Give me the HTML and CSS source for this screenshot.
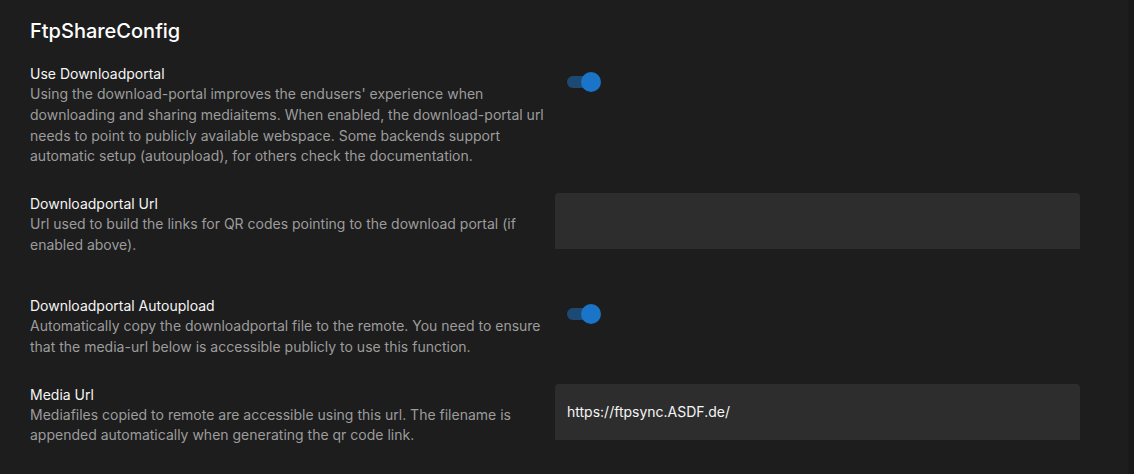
FILE: index.html
```html
<!DOCTYPE html>
<html lang="en">
<head>
  <meta charset="UTF-8">
  <meta name="viewport" content="width=device-width, initial-scale=1.0">
  <title>FtpShareConfig</title>
  <link rel="stylesheet" href="styles.css">
</head>
<body>

  <div class="config-page">
    <h1 class="config-title">FtpShareConfig</h1>

    <div class="settings">

      <div class="setting">
        <div class="setting-info">
          <div class="setting-label">Use Downloadportal</div>
          <div class="setting-desc">Using the download-portal improves the endusers' experience when downloading and sharing mediaitems. When enabled, the download-portal url needs to point to publicly available webspace. Some backends support automatic setup (autoupload), for others check the documentation.</div>
        </div>
        <div class="setting-control">
          <div class="toggle on"><span class="track"></span><span class="thumb"></span></div>
        </div>
      </div>

      <div class="setting">
        <div class="setting-info">
          <div class="setting-label">Downloadportal Url</div>
          <div class="setting-desc">Url used to build the links for QR codes pointing to the download portal (if enabled above).</div>
        </div>
        <div class="setting-control">
          <div class="field"><input type="text" value=""></div>
        </div>
      </div>

      <div class="setting">
        <div class="setting-info">
          <div class="setting-label">Downloadportal Autoupload</div>
          <div class="setting-desc">Automatically copy the downloadportal file to the remote. You need to ensure that the media-url below is accessible publicly to use this function.</div>
        </div>
        <div class="setting-control">
          <div class="toggle on"><span class="track"></span><span class="thumb"></span></div>
        </div>
      </div>

      <div class="setting">
        <div class="setting-info">
          <div class="setting-label">Media Url</div>
          <div class="setting-desc">Mediafiles copied to remote are accessible using this url. The filename is appended automatically when generating the qr code link.</div>
        </div>
        <div class="setting-control">
          <div class="field"><input type="text" value="https://ftpsync.ASDF.de/"></div>
        </div>
      </div>

    </div>
  </div>

</body>
</html>
```

FILE: styles.css
```css
* {
  box-sizing: border-box;
}

body {
  margin: 0;
  min-height: 100vh;
  background-color: #1d1d1d;
  border-right: 6px solid #191919;
  font-family: Inter, "Noto Sans", sans-serif;
  color: #f2f2f2;
  overflow: hidden;
}

.config-page {
  padding: 16px 0 0 30px;
}

.config-title {
  margin: 0;
  font-size: 20px;
  font-weight: 500;
  line-height: 30px;
  color: #fff;
}

.settings {
  display: flex;
  flex-direction: column;
  gap: 26px;
  margin-top: 17px;
}

.setting {
  display: grid;
  grid-template-columns: 515px 525px;
  column-gap: 10px;
  align-items: start;
}

.setting-label {
  font-size: 14px;
  line-height: 21px;
  color: #f5f5f5;
}

.setting-desc {
  font-size: 14px;
  line-height: 20.75px;
  color: #9c9c9c;
}

/* toggle */
.toggle {
  position: relative;
  width: 60px;
  height: 39px;
  margin-left: 12px;
}

.toggle .track {
  position: absolute;
  left: 0;
  top: 13px;
  width: 30px;
  height: 12px;
  border-radius: 6px;
  background: #1d4a75;
}

.toggle .thumb {
  position: absolute;
  left: 14px;
  top: 9px;
  width: 20px;
  height: 20px;
  border-radius: 50%;
  background: #1a74c7;
}

/* text fields */
.field {
  height: 56px;
  margin-bottom: 20px;
  background: #2d2d2d;
  border-radius: 4px 4px 0 0;
  display: flex;
  align-items: center;
  padding: 0 12px;
}

.field input {
  width: 100%;
  border: none;
  outline: none;
  background: transparent;
  font-family: Inter, "Noto Sans", sans-serif;
  font-size: 14px;
  color: #f5f5f5;
  padding: 0;
}
```
